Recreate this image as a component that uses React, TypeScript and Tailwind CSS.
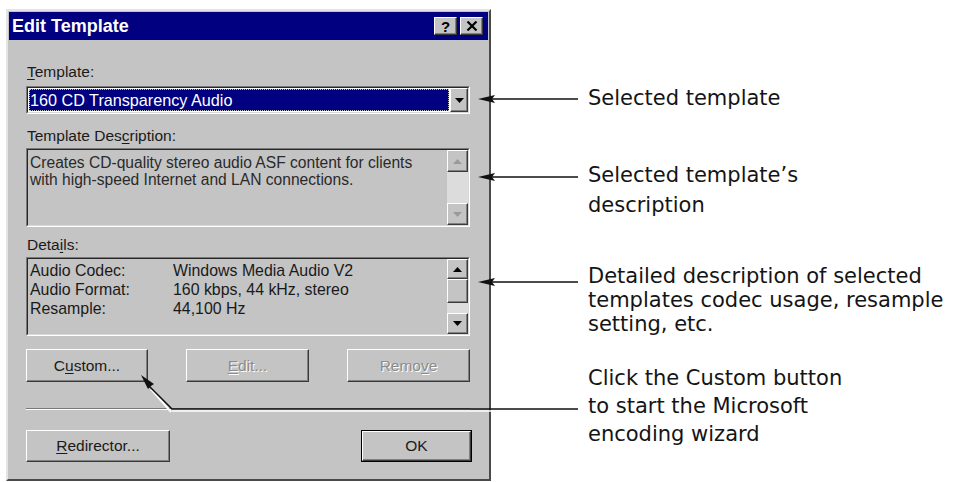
import React from "react";

const raised =
  "border border-t-white border-l-white border-r-[#3a3a3a] border-b-[#3a3a3a] shadow-[inset_-1px_-1px_0_#808080] bg-[#c4c4c4]";

function Btn({
  children,
  className = "",
  isDefault = false,
  disabled = false,
}: {
  children: React.ReactNode;
  className?: string;
  isDefault?: boolean;
  disabled?: boolean;
}) {
  const inner = (
    <div
      className={`${raised} h-full flex items-center justify-center text-[15.5px] ${
        disabled
          ? "text-[#8c8c8c] [text-shadow:1px_1px_0_#ffffff]"
          : "text-[#1a1a1a]"
      }`}
    >
      {children}
    </div>
  );
  if (isDefault) {
    return <div className={`border border-black ${className}`}>{inner}</div>;
  }
  return <div className={className}>{inner}</div>;
}

function Arrow({ dir, muted = false }: { dir: "up" | "down"; muted?: boolean }) {
  const fill = muted ? "#9a9a9a" : "#000";
  return (
    <svg width="9" height="5" viewBox="0 0 9 5">
      {dir === "up" ? (
        <polygon points="0,5 9,5 4.5,0" fill={fill} />
      ) : (
        <polygon points="0,0 9,0 4.5,5" fill={fill} />
      )}
    </svg>
  );
}

function SunkenBox({ className = "", children }: { className?: string; children: React.ReactNode }) {
  return (
    <div
      className={`border border-t-[#7a7a7a] border-l-[#7a7a7a] border-r-white border-b-white ${className}`}
    >
      <div className="h-full border border-t-[#262626] border-l-[#262626] border-r-[#d8d8d8] border-b-[#d8d8d8] flex">
        {children}
      </div>
    </div>
  );
}

function U({ children }: { children: React.ReactNode }) {
  return <span className="underline underline-offset-2">{children}</span>;
}

export default function App() {
  return (
    <div className="relative w-[953px] h-[482px] bg-white overflow-hidden flex font-['Liberation_Sans',Arial,sans-serif]">
      {/* dialog */}
      <div className="mt-[9px] ml-[6px] w-[485px] h-[472px] shrink-0 border-2 border-t-[#e4e4e4] border-l-[#e4e4e4] border-r-[#4a4a4a] border-b-[#4a4a4a] bg-[#c4c4c4] p-[1px] flex flex-col">
        <div className="h-[28px] bg-[#000080] flex items-center pl-[3px] pr-[5px]">
          <span className="text-white font-bold text-[18px]">Edit Template</span>
          <div className="ml-auto flex gap-[3px]">
            <div className={`${raised} w-[23px] h-[18px] flex items-center justify-center text-[15px] font-bold text-black leading-none`}>
              ?
            </div>
            <div className={`${raised} w-[23px] h-[18px] flex items-center justify-center`}>
              <svg width="12" height="10" viewBox="0 0 12 10">
                <path d="M1.5 0.5 L10.5 9.5 M10.5 0.5 L1.5 9.5" stroke="#000" strokeWidth="2.2" />
              </svg>
            </div>
          </div>
        </div>

        <div className="pl-[17px] pr-[18px] flex flex-col text-[15.5px] text-[#1a1a1a]">
          <div className="mt-[23px] h-[18px] leading-[18px] pl-[1px]">
            <U>T</U>emplate:
          </div>

          {/* combo */}
          <SunkenBox className="mt-[5px] h-[28px]">
            <div className="flex-1 bg-white p-[1px] flex">
              <div className="flex-1 bg-[#000080] outline-1 outline-dotted outline-[#c0c0c0] -outline-offset-1 text-white flex items-center pl-[1px] text-[16.2px]">
                160 CD Transparency Audio
              </div>
            </div>
            <div className={`${raised} w-[18px] flex items-center justify-center`}>
              <Arrow dir="down" />
            </div>
          </SunkenBox>

          <div className="mt-[13px] h-[18px] leading-[18px] pl-[1px]">
            Template Des<U>c</U>ription:
          </div>

          <SunkenBox className="mt-[3px] h-[79px]">
            <div className="flex-1 pl-[2px] pt-[4px] text-[15.6px] leading-[17px] text-[#2a2a2a] whitespace-nowrap">
              <div>Creates CD-quality stereo audio ASF content for clients</div>
              <div>with high-speed Internet and LAN connections.</div>
            </div>
            <div className="w-[21px] flex flex-col bg-[#dcdcdc]">
              <div className={`${raised} h-[22px] flex items-center justify-center`}>
                <Arrow dir="up" muted />
              </div>
              <div className="flex-1" />
              <div className={`${raised} h-[22px] flex items-center justify-center`}>
                <Arrow dir="down" muted />
              </div>
            </div>
          </SunkenBox>

          <div className="mt-[9px] h-[18px] leading-[18px] pl-[1px]">
            Deta<U>i</U>ls:
          </div>

          <SunkenBox className="mt-[3px] h-[79px]">
            <div className="flex-1 pl-[2px] pt-[2px] text-[15.9px] leading-[19px]">
              {[
                ["Audio Codec:", "Windows Media Audio V2"],
                ["Audio Format:", "160 kbps, 44 kHz, stereo"],
                ["Resample:", "44,100 Hz"],
              ].map(([k, v]) => (
                <div key={k} className="flex">
                  <span className="w-[143px] shrink-0">{k}</span>
                  <span>{v}</span>
                </div>
              ))}
            </div>
            <div className="w-[21px] flex flex-col bg-[#dcdcdc]">
              <div className={`${raised} h-[20px] flex items-center justify-center`}>
                <Arrow dir="up" />
              </div>
              <div className={`${raised} h-[24px]`} />
              <div className="flex-1" />
              <div className={`${raised} h-[21px] flex items-center justify-center`}>
                <Arrow dir="down" />
              </div>
            </div>
          </SunkenBox>

          <div className="mt-[13px] h-[33px] flex justify-between">
            <Btn className="w-[122px]">
              C<U>u</U>stom...
            </Btn>
            <Btn className="w-[123px]" disabled>
              <U>E</U>dit...
            </Btn>
            <Btn className="w-[123px]" disabled>
              Remo<U>v</U>e
            </Btn>
          </div>

          <div className="mt-[26px] h-[2px] border-t border-t-[#7a7a7a] border-b border-b-white" />

          <div className="mt-[20px] h-[32px] flex justify-between">
            <Btn className="w-[144px]">
              <U>R</U>edirector...
            </Btn>
            <Btn className="w-[111px] -mr-[2px]" isDefault>
              OK
            </Btn>
          </div>
        </div>
      </div>

      {/* callout texts */}
      <div className="ml-[97px] flex flex-col text-[21px] text-[#141414] font-['DejaVu_Sans',Verdana,sans-serif] whitespace-nowrap">
        <div className="mt-[84px] leading-[28px]">Selected template</div>
        <div className="mt-[48px] leading-[30px]">
          <div>Selected template’s</div>
          <div>description</div>
        </div>
        <div className="mt-[44px] leading-[24px]">
          <div>Detailed description of selected</div>
          <div>templates codec usage, resample</div>
          <div>setting, etc.</div>
        </div>
        <div className="mt-[28px] leading-[28px]">
          <div>Click the Custom button</div>
          <div>to start the Microsoft</div>
          <div>encoding wizard</div>
        </div>
      </div>

      {/* callout arrows */}
      <svg className="absolute inset-0 pointer-events-none" width="953" height="482" viewBox="0 0 953 482">
        {[99, 177, 282].map((y) => (
          <g key={y}>
            <line x1="490" y1={y} x2="578" y2={y} stroke="#111" strokeWidth="1.6" />
            <polygon points={`478,${y} 495,${y - 4} 492,${y} 495,${y + 4}`} fill="#111" />
          </g>
        ))}
        <polyline points="172,411 578,411" stroke="#fff" strokeWidth="1.5" fill="none" />
        <polyline points="171,412 151,389" stroke="#fff" strokeWidth="2" fill="none" />
        <polyline points="149,386 172,409 578,409" stroke="#111" strokeWidth="1.6" fill="none" />
        <polygon points="141,375 154,384 151,386 148,389" fill="#111" />
      </svg>
    </div>
  );
}
